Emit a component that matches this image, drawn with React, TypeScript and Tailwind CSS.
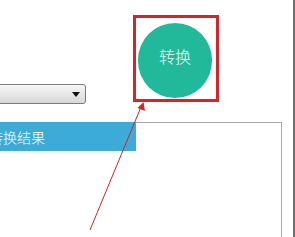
import React from "react";

const cjk = { fontFamily: '"Noto Sans CJK SC", "Noto Sans", sans-serif' };

const App = () => {
  return (
    <div
      className="relative w-[295px] h-[237px] overflow-hidden bg-white border-r-2 border-[#6e6e6e] flex flex-col"
      style={cjk}
    >
      {/* top: select + convert button */}
      <div className="flex items-start h-[122px] shrink-0">
        <div className="mt-[84px] -ml-[20px] w-[106px] h-[20px] border border-[#7b7b7b] rounded-[3px] bg-gradient-to-b from-[#f7f7f7] to-[#d8d8d8] flex items-center justify-end pr-[5px]">
          <svg width="8" height="5" viewBox="0 0 8 5">
            <path d="M0 0 L8 0 L4 5 Z" fill="#111" />
          </svg>
        </div>
        <div className="ml-[47px] mt-[15px] w-[86px] h-[87px] border-[3px] border-[#d3262a] pl-[2px] pt-[5px]">
          <button className="w-[74px] h-[75px] rounded-full bg-[#21b99a] text-[#effffa] text-[16px] font-light leading-none flex items-center justify-center pb-[9px]">
            转换
          </button>
        </div>
      </div>

      {/* bottom: result tab + panel */}
      <div className="flex items-start flex-1 min-h-0">
        <div className="-ml-[11px] w-[147px] h-[29px] bg-[#3dabd8] text-white text-[14px] font-light flex items-center pt-[2px] shrink-0 whitespace-nowrap">
          转换结果
        </div>
        <div className="flex-1 h-full border-t border-r border-[#a9a9a9] mr-[11px]" />
      </div>

      {/* annotation arrow */}
      <svg
        className="absolute left-0 top-0 pointer-events-none"
        width="295"
        height="237"
        viewBox="0 0 295 237"
      >
        <line x1="90" y1="230" x2="141" y2="107" stroke="#c8282c" strokeWidth="1" />
        <path d="M143.5 102 L145 111 L137.5 108 Z" fill="#d3262a" />
      </svg>
    </div>
  );
};

export default App;
